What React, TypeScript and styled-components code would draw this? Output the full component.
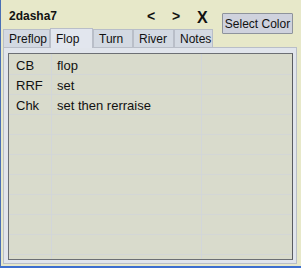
import styled, { createGlobalStyle } from "styled-components";

const Global = createGlobalStyle`
    html, body { margin: 0; padding: 0; }
    body {
        width: 301px;
        height: 268px;
        overflow: hidden;
        font-family: "Liberation Sans", Arial, sans-serif;
    }
`;

const Window = styled.div`
    box-sizing: border-box;
    width: 301px;
    height: 268px;
    background: #e7e8c9;
    border-left: 1px solid #4a6fb5;
    border-bottom: 2px solid #3d6fcf;
    display: flex;
    flex-direction: column;
`;

const TopBar = styled.div`
    display: flex;
    align-items: flex-start;
    height: 30px;
`;

const Title = styled.div`
    font-weight: bold;
    font-size: 12px;
    color: #111;
    margin: 9px 0 0 8px;
    width: 138px;
`;

const NavButton = styled.div<{ $big?: boolean }>`
    font-weight: bold;
    font-size: ${p => (p.$big ? "16px" : "14px")};
    color: #111;
    margin-top: ${p => (p.$big ? "9px" : "8px")};
    width: ${p => (p.$big ? "26px" : "25px")};
`;

const ColorButton = styled.button`
    box-sizing: border-box;
    margin: 13px 0 0 -1px;
    width: 71px;
    height: 21px;
    padding: 0;
    font-family: "Liberation Sans", Arial, sans-serif;
    font-size: 12px;
    color: #111;
    background: #cfd2dd;
    border: 1px solid #8e939c;
    border-radius: 1px;
`;

const TabRow = styled.div`
    display: flex;
    align-items: flex-end;
    height: 17px;
    padding-left: 2px;
`;

const Tab = styled.div<{ $active?: boolean; $w: number }>`
    box-sizing: border-box;
    width: ${p => p.$w}px;
    height: ${p => (p.$active ? "20px" : "18px")};
    margin-bottom: ${p => (p.$active ? "-1px" : "0")};
    padding-left: 5px;
    padding-top: ${p => (p.$active ? "3px" : "2px")};
    font-size: 12px;
    color: #111;
    background: ${p => (p.$active ? "#e2e6ee" : "#d3d9e2")};
    border: 1px solid #b9bec8;
    border-bottom: none;
    position: relative;
    z-index: ${p => (p.$active ? 1 : 0)};
`;

const Panel = styled.div`
    box-sizing: border-box;
    margin: 0 4px 2px 2px;
    flex: 1;
    background: #e1e5ec;
    border: 1px solid #b9bec8;
    padding: 5px 3px 3px 4px;
    display: flex;
`;

const Grid = styled.div`
    flex: 1;
    background: #d9dbcc;
    border: 1px solid #6c6f74;
    border-right-color: #5a5c60;
    padding-top: 1px;
    display: grid;
    grid-template-columns: 42px 150px 1fr;
    grid-auto-rows: 20px;
    align-content: start;
    background-image:
        linear-gradient(to right, transparent 42px, #d2d6da 42px, #d2d6da 43px, transparent 43px),
        linear-gradient(to right, transparent 192px, #d2d6da 192px, #d2d6da 193px, transparent 193px);
`;

const Cell = styled.div<{ $first?: boolean }>`
    font-size: 13px;
    color: #111;
    padding: 3px 0 0 ${p => (p.$first ? "7px" : "6px")};
    line-height: 16px;
    border-bottom: 1px solid #d3d6d6;
    box-sizing: border-box;
    white-space: nowrap;
`;

const tabs: { name: string; w: number }[] = [
    { name: "Preflop", w: 47 },
    { name: "Flop", w: 43 },
    { name: "Turn", w: 40 },
    { name: "River", w: 41 },
    { name: "Notes", w: 39 },
];

const notes: [string, string][] = [
    ["CB", "flop"],
    ["RRF", "set"],
    ["Chk", "set then rerraise"],
    ["", ""],
    ["", ""],
    ["", ""],
    ["", ""],
    ["", ""],
    ["", ""],
    ["", ""],
];

const App = () => {
    return (
        <Window>
            <Global />
            <TopBar>
                <Title>2dasha7</Title>
                <NavButton>&lt;</NavButton>
                <NavButton>&gt;</NavButton>
                <NavButton $big>X</NavButton>
                <ColorButton>Select Color</ColorButton>
            </TopBar>
            <TabRow>
                {tabs.map(t => (
                    <Tab key={t.name} $w={t.w} $active={t.name === "Flop"}>
                        {t.name}
                    </Tab>
                ))}
            </TabRow>
            <Panel>
                <Grid>
                    {notes.map((n, i) => [
                        <Cell key={"a" + i} $first>{n[0]}</Cell>,
                        <Cell key={"b" + i}>{n[1]}</Cell>,
                        <Cell key={"c" + i}></Cell>,
                    ])}
                </Grid>
            </Panel>
        </Window>
    );
};

export default App;
